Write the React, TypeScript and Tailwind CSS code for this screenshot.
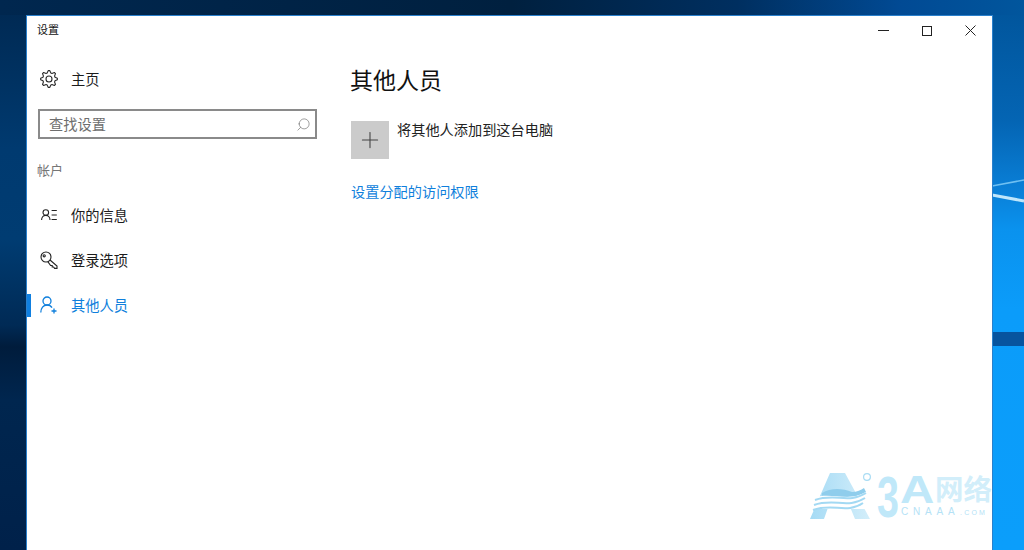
import { Search, Plus } from 'lucide-react';

const font = "font-['Noto_Sans_CJK_SC','Liberation_Sans',sans-serif]";

// 8 tooth gear, like the Windows settings glyph
const gearPoints = Array.from({ length: 32 }, (_, i) => {
  const radius = i % 4 === 0 || i % 4 === 1 ? 8.4 : 6.3;
  const angle = ((i - 0.5) * Math.PI) / 16;
  return `${(9 + radius * Math.cos(angle)).toFixed(2)},${(9 + radius * Math.sin(angle)).toFixed(2)}`;
}).join(' ');

function GearIcon() {
  return (
    <svg width="18" height="18" viewBox="0 0 18 18" fill="none" stroke="#2b2b2b" strokeWidth="1.1">
      <polygon points={gearPoints} strokeLinejoin="round" />
      <circle cx="9" cy="9" r="3" />
    </svg>
  );
}

function InfoIcon() {
  return (
    <svg width="16" height="16" viewBox="0 0 16 16" fill="none" stroke="#222" strokeWidth="1.1">
      <circle cx="4.8" cy="5.5" r="2.8" />
      <path d="M0.6 13c0-3 1.8-4.6 4.2-4.6S9 10 9 13" />
      <path d="M10.6 3.5h5.2M10.6 8h5.2M10.6 12.5h5.2" />
    </svg>
  );
}

function KeyIcon() {
  return (
    <svg width="18" height="18" viewBox="0 0 18 18" fill="none" stroke="#222" strokeWidth="1.1">
      <circle cx="6" cy="6" r="5" />
      <circle cx="4.2" cy="4.8" r="1.1" />
      <path d="M10 9l7 6v2.4h-2.4l-1-1.4h-1.4v-1.5h-1.6L7.8 10.6" />
    </svg>
  );
}

function PeopleIcon() {
  return (
    <svg width="18" height="18" viewBox="0 0 18 18" fill="none" stroke="#0f7fdc" strokeWidth="1.3">
      <circle cx="7" cy="5" r="4" />
      <path d="M0.8 16.5c0-4.2 2.5-7.5 6.2-7.5 2.2 0 4 1 5 2.7" />
      <path d="M14 12.5v5M11.5 15h5" />
    </svg>
  );
}

function WinMinimize() {
  return (
    <svg width="11" height="11" viewBox="0 0 11 11" stroke="#222" strokeWidth="1">
      <path d="M0 5.5h11" />
    </svg>
  );
}

function WinMaximize() {
  return (
    <svg width="10" height="10" viewBox="0 0 10 10" fill="none" stroke="#222" strokeWidth="1">
      <rect x="0.5" y="0.5" width="9" height="9" />
    </svg>
  );
}

function WinClose() {
  return (
    <svg width="11" height="11" viewBox="0 0 11 11" fill="none" stroke="#222" strokeWidth="1">
      <path d="M0.5 0.5l10 10M10.5 0.5l-10 10" />
    </svg>
  );
}

function Watermark() {
  return (
    <svg width="182" height="50" viewBox="0 0 182 50" className="block overflow-visible">
      <defs>
        <linearGradient id="aFill" x1="0" y1="0" x2="1" y2="0">
          <stop offset="0" stopColor="#a6dbf5" />
          <stop offset="1" stopColor="#d3eefa" />
        </linearGradient>
      </defs>
      <path d="M0 47 L20 1 H35 L60 47 H45 L38 30 H20 L14 47Z" fill="url(#aFill)" />
      <path d="M12 21c8-5 20-5 30-1 5 0 9-2 12-4l2 4c-14 8-30 3-44 5z" fill="#8fcdec" />
      <path d="M2 26c20-7 36 5 54-6v17H2z" fill="#fff" />
      <path d="M5 28c20-7 34 4 51-7M4 33c20-7 34 4 51-7M3 38c20-7 34 4 50-7" stroke="#a3d9f3" strokeWidth="2" fill="none" />
      <circle cx="57" cy="5" r="3.4" fill="none" stroke="#a9dcf4" strokeWidth="1.2" />
      <g fill="#c0e8f9" fontFamily="'Liberation Sans',sans-serif" fontWeight="700">
        <text transform="translate(67,45) scale(0.68,1)" fontSize="58">3</text>
        <text transform="translate(90,31) scale(1.25,1)" fontSize="38">A</text>
      </g>
      <g fill="#d2eefa" fontFamily="'Noto Sans CJK SC',sans-serif" fontWeight="700">
        <text x="125" y="28" fontSize="28.5">网络</text>
      </g>
      <g fill="#b5e2f6" fontFamily="'Liberation Sans',sans-serif">
        <text x="91" y="43" fontSize="10" letterSpacing="4.8">CNAAA</text>
        <text x="150" y="43" fontSize="7" letterSpacing="2.2">.COM</text>
      </g>
    </svg>
  );
}

function NavItem({ icon, label, active }: { icon: React.ReactNode; label: string; active?: boolean }) {
  return (
    <div className="h-[45px] flex items-center relative pl-[13px]">
      {active && <div className="absolute left-0 top-[12px] w-[4px] h-[23px] bg-[#0f7fe0]" />}
      <div className="w-[18px] flex justify-center">{icon}</div>
      <span className={`ml-[13px] text-[14.25px] ${active ? 'text-[#0f7fdc]' : 'text-[#1c1c1c]'}`}>{label}</span>
    </div>
  );
}

export default function App() {
  return (
    <div className={`${font} h-[550px] w-[1024px] overflow-hidden relative bg-[linear-gradient(90deg,#00274f_0%,#00203f_50%,#002f60_72%,#014a94_88%,#01569d_100%)]`}>
      {/* desktop wallpaper, left and right of the window */}
      <div className="absolute left-0 top-[15px] w-[26px] h-[535px] bg-[linear-gradient(180deg,#002a54_0%,#003a70_25%,#003c72_42%,#002a55_58%,#001c3c_62%,#00264f_72%,#00214a_100%)]" />
      <div className="absolute right-0 top-[15px] w-[32px] h-[535px] bg-[linear-gradient(180deg,#01569d_0%,#0465b4_20%,#0a80d8_33%,#0a92ee_40%,#0b9cfa_55%,#0b9efb_100%)]">
        <svg width="32" height="535" className="block">
          <path d="M0 171 L32 165" stroke="#6fc0f2" strokeWidth="1.5" fill="none" />
          <path d="M0 180 L32 186" stroke="#bfe6fb" strokeWidth="3" fill="none" />
          <rect x="0" y="317" width="32" height="14" fill="#07549f" />
        </svg>
      </div>

      <div className="relative ml-[26px] mt-[15px] w-[967px] h-[535px] bg-white border-t border-x border-[#2a80cc] flex flex-col">
        {/* title bar */}
        <div className="h-[29px] flex items-center justify-between shrink-0">
          <span className="ml-[10px] mb-[2px] text-[11px] text-[#111]">设置</span>
          <div className="flex items-center">
            <div className="w-[43px] flex justify-center"><WinMinimize /></div>
            <div className="w-[43px] flex justify-center"><WinMaximize /></div>
            <div className="w-[44px] flex justify-center"><WinClose /></div>
          </div>
        </div>

        <div className="flex flex-1">
          {/* sidebar */}
          <div className="w-[323px] shrink-0">
            <div className="h-[45px] mt-[11px] flex items-center pl-[13px]">
              <div className="w-[18px] flex justify-center"><GearIcon /></div>
              <span className="ml-[13px] text-[14.25px] text-[#1c1c1c]">主页</span>
            </div>
            <div className="mt-[8px] ml-[11px] w-[279px] h-[30px] border-2 border-[#8a8a8a] flex items-center justify-between pl-[9px] pr-[4px]">
              <span className="text-[14.25px] text-[#6e6e6e]">查找设置</span>
              <Search size={15} strokeWidth={1} className="text-[#666] -scale-x-100" />
            </div>
            <div className="mt-[22px] ml-[10px] text-[13px] text-[#767676] leading-[18px]">帐户</div>
            <div className="mt-[13px]">
              <NavItem icon={<InfoIcon />} label="你的信息" />
              <NavItem icon={<KeyIcon />} label="登录选项" />
              <NavItem icon={<PeopleIcon />} label="其他人员" active />
            </div>
          </div>

          {/* content */}
          <div className="flex-1 pl-[1px]">
            <h1 className="-ml-[1px] mt-[17px] text-[23px] leading-[34px] text-[#111]">其他人员</h1>
            <div className="mt-[25px] flex items-start">
              <div className="w-[38px] h-[38px] bg-[#cbcbcb] flex items-center justify-center">
                <Plus size={26} strokeWidth={1} className="text-[#444]" />
              </div>
              <span className="ml-[8px] text-[14.2px] leading-[16px] text-[#222]">将其他人添加到这台电脑</span>
            </div>
            <div className="mt-[22px] text-[14.2px] leading-[20px] text-[#0f7fdc]">设置分配的访问权限</div>
          </div>
        </div>

        {/* watermark */}
        <div className="absolute left-[783px] top-[456px] w-[182px]">
          <Watermark />
        </div>
      </div>
    </div>
  );
}
